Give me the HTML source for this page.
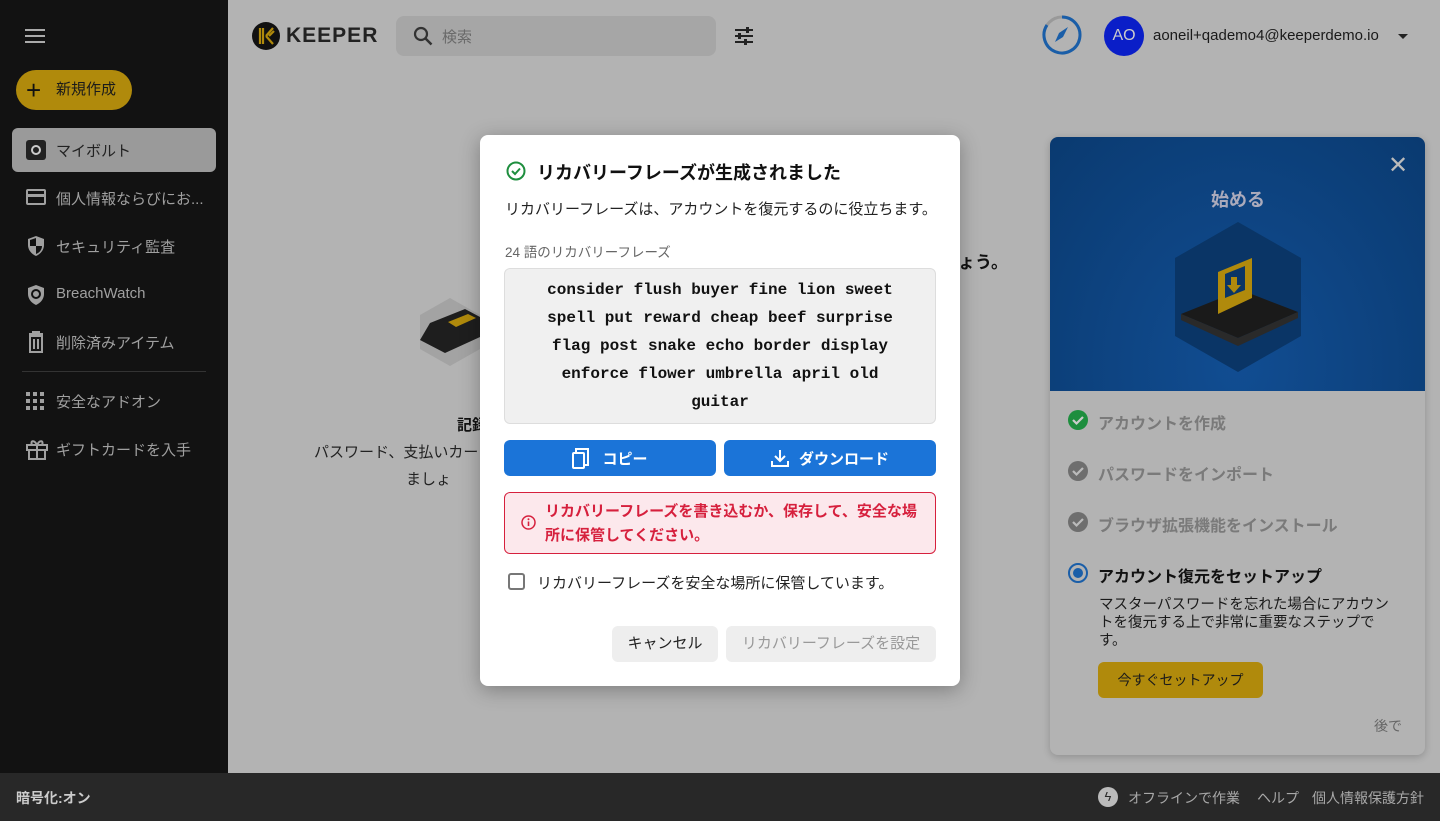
<!DOCTYPE html>
<html><head><meta charset="utf-8"><style>
*{box-sizing:border-box;margin:0;padding:0}
body{width:1440px;height:821px;overflow:hidden;background:#b3b3b3;font-family:"Liberation Sans","Noto Sans CJK JP",sans-serif;position:relative}
.sb{position:absolute;left:0;top:0;width:228px;height:773px;background:#121212}
.ft{position:absolute;left:0;top:773px;width:1440px;height:48px;background:#282828;color:#a8a8a8;font-size:14px}
.nav{position:absolute;left:56px;color:#a0a0a0;font-size:15px}
.ico{position:absolute;left:26px}
.abs{position:absolute}
.modal{position:absolute;left:480px;top:135px;width:480px;height:551px;background:#fff;border-radius:8px;box-shadow:0 4px 20px rgba(0,0,0,.3)}
.mono{font-family:"Liberation Mono",monospace;font-weight:bold;font-size:16px;color:#111;text-align:center;line-height:28px}
.btn{position:absolute;top:305px;height:36px;width:212px;background:#1b74d8;border-radius:6px;color:#fff;font-size:15px;font-weight:bold;display:flex;align-items:center;justify-content:center;gap:10px}
.step{position:absolute;left:1098px;font-size:16px;font-weight:bold;color:#7a7a7a}
.chk{position:absolute;left:1068px;width:20px;height:20px;border-radius:50%;background:#6e6e6e}
</style></head><body>
<div class="sb">
  <svg class="abs" style="left:25px;top:29px" width="20" height="14"><rect y="0" width="20" height="2" fill="#aaa"/><rect y="6" width="20" height="2" fill="#aaa"/><rect y="12" width="20" height="2" fill="#aaa"/></svg>
  <div class="abs" style="left:16px;top:70px;width:116px;height:40px;border-radius:20px;background:#b08a0c;color:#1a1a1a;font-size:15px;line-height:40px;padding-left:40px">新規作成</div>
  <div class="abs" style="left:26px;top:80px;font-size:26px;line-height:20px;color:#111">+</div>
  <div class="abs" style="left:12px;top:128px;width:204px;height:44px;border-radius:6px;background:#9a9a9a"></div>
  <div class="abs" style="left:26px;top:140px;width:20px;height:20px;background:#222;border-radius:3px"><div style="position:absolute;left:5px;top:5px;width:10px;height:10px;border-radius:50%;border:2px solid #ccc"></div></div>
  <div class="nav" style="top:140px;color:#222">マイボルト</div>
  <div class="ico" style="top:189px;width:20px;height:16px;border:2px solid #a0a0a0;border-radius:2px"><div style="margin-top:3px;height:3px;background:#a0a0a0"></div></div>
  <div class="nav" style="top:188px">個人情報ならびにお...</div>
  <svg class="ico" style="top:235px" width="20" height="22" viewBox="0 0 20 22"><path d="M10 1L2 4v6c0 5 3.5 9 8 11 4.5-2 8-6 8-11V4z" fill="#a0a0a0"/><path d="M10 3v8H4V5zM10 11h6c0 4-3 7-6 8z" fill="#121212"/></svg>
  <div class="nav" style="top:236px">セキュリティ監査</div>
  <svg class="ico" style="top:284px" width="20" height="22" viewBox="0 0 20 22"><path d="M10 1L2 4v6c0 5 3.5 9 8 11 4.5-2 8-6 8-11V4z" fill="#a0a0a0"/><circle cx="10" cy="10" r="4" fill="none" stroke="#121212" stroke-width="2"/></svg>
  <div class="nav" style="top:285px">BreachWatch</div>
  <svg class="ico" style="top:331px" width="20" height="22" viewBox="0 0 20 22"><path d="M3 3h14M7 3V1h6v2M4 5h12v16H4zM8 8v10M12 8v10" fill="none" stroke="#a0a0a0" stroke-width="2"/></svg>
  <div class="nav" style="top:332px">削除済みアイテム</div>
  <div class="abs" style="left:22px;top:371px;width:184px;height:1px;background:#333"></div>
  <svg class="ico" style="top:392px" width="18" height="18"><g fill="#a0a0a0"><rect x="0" y="0" width="4" height="4"/><rect x="7" y="0" width="4" height="4"/><rect x="14" y="0" width="4" height="4"/><rect x="0" y="7" width="4" height="4"/><rect x="7" y="7" width="4" height="4"/><rect x="14" y="7" width="4" height="4"/><rect x="0" y="14" width="4" height="4"/><rect x="7" y="14" width="4" height="4"/><rect x="14" y="14" width="4" height="4"/></g></svg>
  <div class="nav" style="top:391px">安全なアドオン</div>
  <svg class="ico" style="top:438px" width="22" height="22" viewBox="0 0 22 22"><path d="M1 7h20v5H1zM3 12h16v9H3zM11 7v14M11 7C8 1 4 3 6 7M11 7c3-6 7-4 5 0" fill="none" stroke="#a0a0a0" stroke-width="2"/></svg>
  <div class="nav" style="top:439px">ギフトカードを入手</div>
</div>

<svg class="abs" style="left:252px;top:22px" width="28" height="28" viewBox="0 0 28 28"><circle cx="14" cy="14" r="14" fill="#111"/><path d="M8 6v16M11 6v16M14 14l7-8M14 14l7 8M17 14l5-5" stroke="#b08a0c" stroke-width="2.2" fill="none"/></svg>
<div class="abs" style="left:286px;top:24px;font-size:21px;font-weight:bold;letter-spacing:1px;color:#222">KEEPER</div>
<div class="abs" style="left:396px;top:16px;width:320px;height:40px;border-radius:8px;background:#a6a6a6"></div>
<svg class="abs" style="left:413px;top:26px" width="20" height="20"><circle cx="8" cy="8" r="6" stroke="#333" stroke-width="2.2" fill="none"/><path d="M12.5 12.5l6 6" stroke="#333" stroke-width="2.5"/></svg>
<div class="abs" style="left:442px;top:26px;font-size:15px;color:#6a6a6a">検索</div>
<svg class="abs" style="left:734px;top:26px" width="20" height="20"><g stroke="#222" stroke-width="2"><path d="M1 4h18M1 10h18M1 16h18"/></g><g fill="#222"><rect x="12" y="1" width="3" height="6"/><rect x="4" y="7" width="3" height="6"/><rect x="10" y="13" width="3" height="6"/></g></svg>

<svg class="abs" style="left:1041px;top:14px" width="42" height="42"><circle cx="21" cy="21" r="18" stroke="#999" stroke-width="3" fill="none"/><path d="M21 3A18 18 0 1 1 6 11" stroke="#1a5ea8" stroke-width="3" fill="none"/><path d="M14 28l4-9 9-6-5 10z" fill="#1a5ea8"/></svg>
<div class="abs" style="left:1104px;top:16px;width:40px;height:40px;border-radius:50%;background:#0a1ec8;color:#ccc;font-size:16px;line-height:40px;text-align:center">AO</div>
<div class="abs" style="left:1153px;top:26px;font-size:15px;color:#1a1a1a;line-height:20px">aoneil+qademo4@keeperdemo.io</div>
<div class="abs" style="left:1398px;top:34px;border:5px solid transparent;border-top-color:#222"></div>

<svg class="abs" style="left:420px;top:298px" width="60" height="68" viewBox="0 0 60 68"><path d="M30 0L60 17v34L30 68 0 51V17z" fill="#a3a3a3"/><path d="M10 25l35-14 15 8v20L25 55 0 42z" fill="#1e1e1e"/><path d="M28 24l20-8 8 4-20 9z" fill="#b08a0c"/></svg>
<div class="abs" style="left:457px;top:414px;font-size:15px;font-weight:bold;color:#111">記録</div>
<div class="abs" style="left:314px;top:441px;font-size:15px;color:#222">パスワード、支払いカー</div>
<div class="abs" style="left:406px;top:468px;font-size:15px;color:#222">ましょ</div>
<div class="abs" style="left:958px;top:248px;font-size:17px;font-weight:bold;color:#111">ょう。</div>

<div class="abs" style="left:1050px;top:137px;width:375px;height:618px;border-radius:8px;background:#b3b3b3;box-shadow:0 2px 8px rgba(0,0,0,.2);overflow:hidden">
  <div style="height:254px;background:radial-gradient(ellipse at 50% 90%,#114d92,#0a3a70)"></div>
</div>
<div class="abs" style="left:1388px;top:156px;color:#bbb;font-size:24px;line-height:20px">✕</div>
<div class="abs" style="left:1211px;top:186px;font-size:18px;font-weight:bold;color:#aab">始める</div>
<svg class="abs" style="left:1173px;top:222px" width="130" height="150" viewBox="0 0 130 150"><path d="M65 0l63 36v78l-63 36-63-36V36z" fill="#0a3566"/><path d="M8 92l60-24 57 22-60 26z" fill="#1a1a1a"/><path d="M8 92v6l57 26v-8zM125 90v6l-60 28v-8z" fill="#2a2a2a"/><path d="M45 50l34-14v40l-34 16z" fill="#b08a0c"/><path d="M52 52l20-8v24l-20 8z" fill="#0a3566"/><path d="M58 55h6v8h4l-7 8-7-8h4z" fill="#b08a0c"/></svg>
<svg class="chk" style="top:410px;background:#1e8e3e" viewBox="0 0 20 20"><path d="M5 10l3.5 3.5L15 7" stroke="#ccc" stroke-width="2.2" fill="none"/></svg>
<div class="step" style="top:410px">アカウントを作成</div>
<svg class="chk" style="top:461px" viewBox="0 0 20 20"><path d="M5 10l3.5 3.5L15 7" stroke="#bbb" stroke-width="2.2" fill="none"/></svg>
<div class="step" style="top:461px">パスワードをインポート</div>
<svg class="chk" style="top:512px" viewBox="0 0 20 20"><path d="M5 10l3.5 3.5L15 7" stroke="#bbb" stroke-width="2.2" fill="none"/></svg>
<div class="step" style="top:512px">ブラウザ拡張機能をインストール</div>
<div class="chk" style="top:563px;background:none;border:2px solid #1a5ea8"><div style="margin:3px;width:10px;height:10px;border-radius:50%;background:#1a5ea8"></div></div>
<div class="step" style="top:563px;color:#111">アカウント復元をセットアップ</div>
<div class="abs" style="left:1099px;top:596px;width:300px;font-size:14.5px;line-height:18px;color:#1a1a1a">マスターパスワードを忘れた場合にアカウントを復元する上で非常に重要なステップです。</div>
<div class="abs" style="left:1098px;top:662px;width:165px;height:36px;border-radius:6px;background:#b08a0c;font-size:14px;line-height:36px;text-align:center;color:#1a1a1a">今すぐセットアップ</div>
<div class="abs" style="left:1374px;top:716px;font-size:14px;color:#666">後で</div>

<div class="ft">
  <div class="abs" style="left:16px;top:15px;color:#ccc;font-weight:bold">暗号化:オン</div>
  <div class="abs" style="left:1098px;top:14px;width:20px;height:20px;border-radius:50%;background:#bbb;color:#282828;font-size:13px;text-align:center;line-height:20px">ϟ</div>
  <div class="abs" style="left:1128px;top:15px">オフラインで作業</div>
  <div class="abs" style="left:1257px;top:15px">ヘルプ</div>
  <div class="abs" style="left:1312px;top:15px">個人情報保護方針</div>
</div>

<div class="modal">
  <svg class="abs" style="left:26px;top:26px" width="20" height="20" viewBox="0 0 20 20"><circle cx="10" cy="10" r="8.5" stroke="#1e8e3e" stroke-width="2" fill="none"/><path d="M6 10l3 3 5-5.5" stroke="#1e8e3e" stroke-width="2" fill="none"/></svg>
  <div class="abs" style="left:57px;top:24px;font-size:18px;font-weight:bold;color:#111">リカバリーフレーズが生成されました</div>
  <div class="abs" style="left:25px;top:63px;font-size:15px;color:#222">リカバリーフレーズは、アカウントを復元するのに役立ちます。</div>
  <div class="abs" style="left:25px;top:106px;font-size:13.5px;color:#666">24 語のリカバリーフレーズ</div>
  <div class="abs mono" style="left:24px;top:133px;width:432px;height:156px;background:#f0f0f0;border:1px solid #ddd;border-radius:6px;padding:7px 30px">consider flush buyer fine lion sweet<br>spell put reward cheap beef surprise<br>flag post snake echo border display<br>enforce flower umbrella april old<br>guitar</div>
  <div class="btn" style="left:24px"><svg width="20" height="22" viewBox="0 0 20 22"><path d="M4 5V2h12v16h-3" fill="none" stroke="#fff" stroke-width="2"/><rect x="1" y="6" width="11" height="15" rx="1" fill="none" stroke="#fff" stroke-width="2"/></svg>コピー</div>
  <div class="btn" style="left:244px"><svg width="18" height="18" viewBox="0 0 18 18"><path d="M9 1v11M4 7l5 5 5-5M1 12v5h16v-5" fill="none" stroke="#fff" stroke-width="2"/></svg>ダウンロード</div>
  <div class="abs" style="left:24px;top:357px;width:432px;height:62px;background:#fce8ec;border:1px solid #d6203d;border-radius:6px;padding:7px 10px 0 40px;color:#d6203d;font-size:15px;font-weight:bold;line-height:24px">リカバリーフレーズを書き込むか、保存して、安全な場所に保管してください。</div>
  <svg class="abs" style="left:41px;top:380px" width="15" height="15" viewBox="0 0 15 15"><circle cx="7.5" cy="7.5" r="6.5" stroke="#d6203d" stroke-width="1.5" fill="none"/><path d="M7.5 6.5v4.5" stroke="#d6203d" stroke-width="1.6"/><circle cx="7.5" cy="4.3" r="1" fill="#d6203d"/></svg>
  <div class="abs" style="left:28px;top:438px;width:17px;height:17px;border:2px solid #777;border-radius:3px"></div>
  <div class="abs" style="left:57px;top:437px;font-size:15px;color:#222">リカバリーフレーズを安全な場所に保管しています。</div>
  <div class="abs" style="left:132px;top:491px;width:106px;height:36px;background:#eee;border-radius:6px;font-size:15px;line-height:36px;text-align:center;color:#222">キャンセル</div>
  <div class="abs" style="left:246px;top:491px;width:210px;height:36px;background:#eee;border-radius:6px;font-size:15px;line-height:36px;text-align:center;color:#999">リカバリーフレーズを設定</div>
</div>
</body></html>
